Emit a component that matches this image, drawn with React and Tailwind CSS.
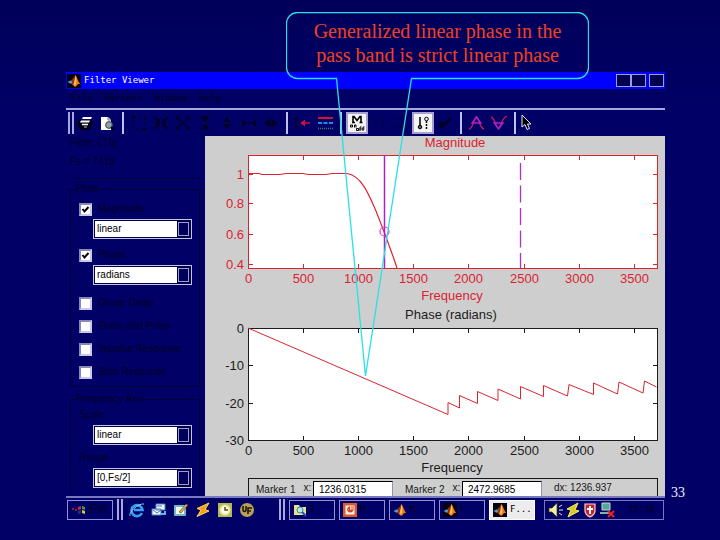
import React from "react";

const SANS = "font-['Liberation_Sans',Arial,sans-serif]";
const MONO = "font-['DejaVu_Sans_Mono','Noto_Sans_CJK_SC',monospace]";

function MatlabLogo({ boxed }) {
  return (
    <svg width="14" height="14" viewBox="0 0 14 14" aria-hidden="true">
      {boxed && <rect width="14" height="14" fill="#000010" />}
      <path d="M0.5 8 L4 6.2 L6 8 L4 10 Z" fill="#4aa0c8" />
      <path d="M4 6.2 L6.5 4 L8.5 1 L7.5 7 L5.8 11 L4 9.8 L5.6 8 Z" fill="#a03010" />
      <path d="M8.5 1 C10 3 11 7.5 13.5 10.5 C12 9.6 10.8 10 9.6 12 C8.6 13.4 7 13 5.8 10.6 C7.4 8 7.8 4 8.5 1 Z" fill="#f07818" />
      <path d="M8.5 1 C9.4 4 9.6 7 9 10 L7.6 11.8 L7 9 C8 6 8.2 3.4 8.5 1 Z" fill="#f8c858" />
    </svg>
  );
}

function Sep() {
  return <span className="mx-1 h-[22px] w-[2px] shrink-0 bg-[#c0c0ec]" />;
}

function Grip() {
  return (
    <span className="flex h-[22px] w-[6px] shrink-0 gap-[2px]">
      <span className="w-[2px] border border-[#a8a8dc]" />
      <span className="w-[2px] border border-[#a8a8dc]" />
    </span>
  );
}

function Tool({ label, on, children }) {
  return (
    <button
      type="button"
      aria-label={label}
      className={
        on
          ? "flex size-[22px] shrink-0 border-2 border-[#a8a0d0] bg-[#f4f4f4]"
          : "flex size-[22px] shrink-0"
      }
    >
      <svg viewBox={on ? "2 2 18 18" : "0 0 22 22"} className="size-full" fill="none">
        {children}
      </svg>
    </button>
  );
}

function Toolbar() {
  const d = "#000024";
  return (
    <div className="flex h-[26px] items-center overflow-hidden pl-[2px]">
      <Grip />
      <Tool label="Print">
        <path d="M4 8 L17 8 L19 12 L15 18 H7 L3 13 Z" fill="#000018" />
        <path d="M9 5 H18 L17 7 H8 Z M7 8.500 H16 L15 10.500 H6 Z" fill="#fff" />
        <path d="M8 12.500 H14" stroke="#fff" strokeWidth="1.500" />
        <path d="M10 15 H13" stroke="#b8c8a0" />
      </Tool>
      <Tool label="Print preview">
        <path d="M5 5 H12 L15 8 V18 H5 Z" fill="#fff" />
        <path d="M12 5 V8 H15" stroke="#777" />
        <circle cx="13" cy="13" r="3.4" fill="#8ea0a8" stroke="#38484c" />
        <path d="M15 15 L18 18" stroke={d} strokeWidth="2" />
      </Tool>
      <Sep />
      <Tool label="Zoom region">
        <path d="M5 5 H17 V17 H5 Z" stroke={d} strokeDasharray="3 3" />
        <path d="M4 6 L7 4 M14 17 L18 17" stroke={d} strokeWidth="2" />
      </Tool>
      <Tool label="Zoom in">
        <path d="M4 5 L9 10 M18 5 L13 10 M4 17 L9 12 M18 17 L13 12 M9 7 V10 H6 M13 7 V10 H16 M9 15 V12 H6 M13 15 V12 H16" stroke={d} strokeWidth="1.5" />
      </Tool>
      <Tool label="Zoom full">
        <path d="M5 5 L17 17 M17 5 L5 17 M5 8 V5 H8 M14 5 H17 V8 M5 14 V17 H8 M14 17 H17 V14" stroke={d} strokeWidth="1.2" />
      </Tool>
      <Tool label="Zoom in y">
        <path d="M8 6 H14 L11 10 Z M8 16 H14 L11 12 Z" fill={d} stroke={d} />
        <path d="M7 5 H15 M7 17 H15" stroke={d} strokeWidth="1.500" />
      </Tool>
      <Tool label="Zoom out y">
        <path d="M11 5 L15 10 H7 Z M11 17 L15 12 H7 Z" fill={d} />
      </Tool>
      <Tool label="Zoom in x">
        <path d="M4 7 V15 L9 11 Z M18 7 V15 L13 11 Z" fill={d} />
        <path d="M4 11 H18" stroke={d} />
      </Tool>
      <Tool label="Zoom out x">
        <path d="M5 11 L10 7 V15 Z M17 11 L12 7 V15 Z" fill={d} stroke={d} />
      </Tool>
      <Sep />
      <Tool label="Select trace">
        <path d="M4 5 V17" stroke={d} strokeWidth="2" />
        <path d="M9 11 H18" stroke="#d01040" strokeWidth="1.5" />
        <path d="M13 7.500 L8.500 11 L13 14.500 Z" fill="#d01040" />
      </Tool>
      <Tool label="Line properties">
        <path d="M4 6 H19" stroke="#d81030" strokeWidth="2" />
        <path d="M4 11 H19" stroke="#2088e8" strokeWidth="2" strokeDasharray="4 1.5" />
        <path d="M4 16.5 H19" stroke="#208868" strokeWidth="1.5" strokeDasharray="1 1" />
      </Tool>
      <Sep />
      <Tool label="Toggle markers" on>
        <path d="M6 10.5 H9 M7 10.5 V4.5 H8 L11 8.5 L14 4.5 H15 V10.5 M13.5 10.5 H16.5" stroke="#000" strokeWidth="1.6" />
        <path d="M4.5 13 H6.5 V15 H4.5 Z M8.5 15.5 V13 H10 V15.5" stroke="#000" />
        <path d="M10.5 16.5 H12.5 V18.5 H10.5 Z M14 19 V15 H15.5 M17 19 V15 H18.5 M13.5 17 H18.5" stroke="#000" />
      </Tool>
      <Tool label="Vertical markers">
        <path d="M7 5 V17 M15 5 V17" stroke="#000044" />
      </Tool>
      <Tool label="Horizontal markers">
        <path d="M4 7 H18 M4 15 H18" stroke="#000050" />
      </Tool>
      <Tool label="Track markers" on>
        <path d="M8 5 V15" stroke="#000" strokeWidth="1.5" />
        <circle cx="8" cy="15" r="1.800" fill="#555" stroke="#000" />
        <path d="M14.500 9 V18" stroke="#000" strokeWidth="1.500" strokeDasharray="2 1" />
        <circle cx="14.500" cy="7" r="1.800" stroke="#000" />
      </Tool>
      <Tool label="Slope markers">
        <path d="M5 14 L8 11 L10 13 L17 6 M6 16 L9 14" stroke={d} strokeWidth="2.5" />
      </Tool>
      <Sep />
      <Tool label="Find peaks">
        <path d="M3 17 C7 17 8 5 10.500 5 C13 5 13 16 18 17" stroke="#d01850" strokeWidth="1.300" />
        <path d="M10.500 5 L15 11 H6 Z" stroke="#b020d0" strokeWidth="1.300" />
      </Tool>
      <Tool label="Find valleys">
        <path d="M3 5 C7 6 8 16 10.500 16 C13 16 13 6 19 4" stroke="#d01850" strokeWidth="1.300" />
        <path d="M10.500 17 L15 11 H6 Z" stroke="#b020d0" strokeWidth="1.300" />
      </Tool>
      <Sep />
      <Tool label="Help pointer">
        <path d="M2 3 V15 L5 12.500 L7 17.500 L9.500 16.500 L7.500 12 H11 Z" fill="#000" stroke="#e8e8ff" />
      </Tool>
    </div>
  );
}

function Drop({ id, label, value }) {
  return (
    <div className="ml-[22px] mt-[3px] flex h-5 w-[99px] border border-[#c4c4e8] bg-[#000048] p-px">
      <select
        id={id}
        aria-label={label}
        defaultValue={value}
        className="min-w-0 flex-1 appearance-none bg-white pl-[2px] text-[10px] leading-[16px] text-black"
      >
        <option>{value}</option>
      </select>
      <span className="pointer-events-none m-px w-[11px] border border-[#9c9cd8] bg-[#000058]" />
    </div>
  );
}

function Check({ label, checked, className }) {
  return (
    <label className={"ml-2 flex h-[14px] items-center gap-[6px] " + className}>
      <span className="grid size-[13px] place-items-center">
        <input
          type="checkbox"
          defaultChecked={checked}
          className="col-start-1 row-start-1 size-[13px] appearance-none border-2 border-t-[#8888b0] border-l-[#8888b0] border-b-[#c8c8e8] border-r-[#c8c8e8] bg-white"
        />
        {checked && (
          <svg viewBox="0 0 9 9" className="pointer-events-none col-start-1 row-start-1 size-[9px]" fill="none">
            <path d="M1.500 4 L3.500 6.500 L7.500 2" stroke="#000" strokeWidth="2" />
          </svg>
        )}
      </span>
      {label}
    </label>
  );
}

function SidePanel() {
  return (
    <aside className="w-[139px] shrink-0 pl-1 pr-[5px] text-[10px] leading-[14px] text-[#000028]">
      <p>Filter: LTIp</p>
      <p className="mt-[5px]">Fs = 7418</p>
      <div className="mt-[9px] h-px bg-[#000034]" />
      <fieldset className="mt-[3px] border border-[#000034] pb-[7px]">
        <legend className="ml-1 px-px">Plots</legend>
        <Check label="Magnitude" checked className="mt-[6px]" />
        <Drop id="mag" label="Magnitude units" value="linear" />
        <Check label="Phase" checked className="mt-[9px]" />
        <Drop id="phase" label="Phase units" value="radians" />
        <Check label="Group Delay" className="mt-[11px]" />
        <Check label="Zeros and Poles" className="mt-[9px]" />
        <Check label="Impulse Response" className="mt-[9px]" />
        <Check label="Step Response" className="mt-[9px]" />
      </fieldset>
      <fieldset className="mt-[5px] border border-b-0 border-[#000034] pb-[6px]">
        <legend className="ml-1 px-px">Frequency Axis</legend>
        <label htmlFor="scale" className="ml-2 mt-[2px] block">Scale</label>
        <Drop id="scale" label="Scale" value="linear" />
        <label htmlFor="range" className="ml-2 mt-[6px] block">Range</label>
        <Drop id="range" label="Range" value="[0,Fs/2]" />
      </fieldset>
    </aside>
  );
}

const X_TICKS = [0, 500, 1000, 1500, 2000, 2500, 3000, 3500];
const tickX = (v) => Math.round(248 + v * 0.1102) + 0.5;

function Axes({ top, bottom, color, yTicks, title, titleX, titleY, labelY, freqY }) {
  return (
    <g>
      <rect x="248.500" y={top + 0.5} width="409" height={bottom - top} fill="#fff" stroke={color} />
      {X_TICKS.map((v) => (
        <g key={v}>
          <path d={`M${tickX(v)} ${top} v5 M${tickX(v)} ${bottom} v-4`} stroke={color} />
          <text x={tickX(v)} y={labelY} textAnchor="middle" fill={color}>{v}</text>
        </g>
      ))}
      {yTicks.map(([label, y]) => (
        <g key={label}>
          <path d={`M248 ${y + 0.5} h5 M658 ${y + 0.5} h-5`} stroke={color} />
          <text x="244" y={y + 5} textAnchor="end" fill={color}>{label}</text>
        </g>
      ))}
      <text x="452" y={freqY} textAnchor="middle" fill={color}>Frequency</text>
      <text x={titleX} y={titleY} textAnchor="middle" fill={color}>{title}</text>
    </g>
  );
}

function Charts() {
  return (
    <svg
      viewBox="205 136 460 342"
      className="block w-full overflow-visible font-['Liberation_Sans',Arial,sans-serif] text-[13px]"
      fill="none"
      role="img"
      aria-label="Magnitude and phase response"
    >
      <Axes top={155} bottom={268} color="#dc2430" title="Magnitude" titleX={455} titleY={147} labelY={283} freqY={300}
        yTicks={[["1", 174], ["0.8", 203], ["0.6", 234], ["0.4", 264]]} />
      <Axes top={328} bottom={440} color="#1c1c1c" title="Phase (radians)" titleX={451} titleY={319} labelY={455} freqY={472}
        yTicks={[["0", 328], ["-10", 365], ["-20", 403], ["-30", 440]]} />
      <path d="M248 173.500 H259 L262 174.500 H280 L286 173.500 H303 L308 174.500 H326 L332 173.500 H347 C362 176 369 195 376 211 C384 231 391 250 397 268" stroke="#dc2430" strokeWidth="1.2" />
      <path d="M384.500 155 V268" stroke="#a820c8" strokeWidth="1.5" />
      <circle cx="384.500" cy="231.500" r="4.500" stroke="#d840d8" strokeWidth="1.200" />
      <path d="M520.500 163 V268" stroke="#b030c8" strokeWidth="1.300" strokeDasharray="17 5.500" />
      <path d="M248 328 L448 414.500 V402.500 L459.500 408 V395.500 L477.500 403.500 V391.500 L498 400.500 V389 L520.500 399 V386.500 L543.500 396.500 V385.500 L567.500 396 L569 384.500 L593.500 394.500 V383 L617.500 394 L619 382 L643 393 L644.500 381 L656.500 387" stroke="#dc2430" />
    </svg>
  );
}

function Marker({ id, label, value }) {
  return (
    <>
      <label htmlFor={id} className="flex w-[57px] shrink-0 gap-2 whitespace-nowrap">
        <span className="pt-[2px]">{label}</span>
        <span>x:</span>
      </label>
      <input
        id={id}
        defaultValue={value}
        className="mr-3 mt-[2px] h-[18px] w-[80px] min-w-0 border border-[#9090b8] border-l-black border-t-black bg-white pl-[5px] text-[10px] text-black"
      />
    </>
  );
}

function MarkerBar() {
  return (
    <div className="ml-[43px] mr-[7px] flex h-[18px] overflow-hidden border border-b-0 border-[#181818] pl-[7px] text-[10px] leading-[18px] text-[#181818]">
      <Marker id="m1" label="Marker 1" value="1236.0315" />
      <Marker id="m2" label="Marker 2" value="2472.9685" />
      <output className="whitespace-nowrap">dx: 1236.937</output>
    </div>
  );
}

function QuickIcon({ label, children }) {
  return (
    <button type="button" aria-label={label} className="size-4 shrink-0">
      <svg viewBox="0 0 16 16" className="size-full" fill="none">{children}</svg>
    </button>
  );
}

function Task({ active, text, children }) {
  return (
    <button
      type="button"
      className={
        "flex h-5 w-[46px] shrink-0 items-center gap-[3px] border pl-[3px] text-[9px] " +
        (active ? "border-white bg-[#ececec] text-black" : "border-[#9090d4] text-[#000028]")
      }
    >
      {children}
      {text}
    </button>
  );
}

function Taskbar() {
  return (
    <div className={"flex h-6 items-center overflow-hidden border-t-2 border-[#7878c0] pl-px pt-px " + MONO}>
      <button type="button" className="flex h-5 w-[46px] shrink-0 items-center gap-[2px] border border-[#9090d4] pl-[3px] text-[9px] text-[#000028]">
        <svg viewBox="0 0 16 14" className="h-[14px] w-4" fill="none">
          <path d="M1 6 H3 M4 7 H6" stroke="#a01828" strokeWidth="2" />
          <path d="M7 4 L10 3 V6 L7 7 Z" fill="#e02828" />
          <path d="M11 3 L14 4 V7 L11 6 Z" fill="#28a838" />
          <path d="M7 8 L10 7 V10 L7 11 Z" fill="#183890" />
          <path d="M11 7 L14 8 V11 L11 10 Z" fill="#e8c828" />
        </svg>
        开始
      </button>
      <span className="ml-1"><Grip /></span>
      <div className="ml-[6px] flex w-[150px] shrink-0 gap-[6px]">
        <QuickIcon label="Browser">
          <path d="M13 11 A5.500 5.500 0 1 1 13.500 8 H5" stroke="#38a0f0" strokeWidth="2.600" />
          <path d="M1 14 C-1 11 9 1 15 2" stroke="#90d0ff" />
        </QuickIcon>
        <QuickIcon label="Mail">
          <path d="M5 2 H14 V8 H5 Z M1 7 H10 V13 H1 Z" fill="#f4f4f4" stroke="#5080c0" />
          <path d="M2 8 L6 11 L10 8 M6 4 L11 4" stroke="#3878d0" />
          <path d="M10 12 H14 V9" stroke="#60b0f0" strokeWidth="2" />
        </QuickIcon>
        <QuickIcon label="Desktop">
          <rect x="1" y="3" width="12" height="11" rx="1" fill="#70b8c8" />
          <path d="M3 5 H11 V12 H3 Z" fill="#f8f8e8" />
          <path d="M6 10 L13 2 L15 3 L8 11 Z" fill="#d8b048" stroke="#504020" strokeWidth=".6" />
        </QuickIcon>
        <QuickIcon label="Winamp">
          <path d="M14 1 L2 6.500 L6 8 L2 14.500 L14 9 L10 7.500 Z" fill="#f8a018" stroke="#f8d868" />
        </QuickIcon>
        <QuickIcon label="Clock">
          <rect x="1" y="1" width="14" height="14" fill="#b8b850" />
          <circle cx="8" cy="8" r="4.500" fill="#fffff0" stroke="#e8e8b0" strokeWidth="2" />
          <path d="M8 5 V8 H11" stroke="#505010" strokeWidth="1.500" />
        </QuickIcon>
        <QuickIcon label="Editor">
          <circle cx="8" cy="8" r="7" fill="#b8a058" />
          <path d="M4 4 V8 C4 10 7 10 7 8 V4 M13 6 H9 V12 M9 9 H12" stroke="#201808" strokeWidth="1.600" />
        </QuickIcon>
      </div>
      <Grip />
      <div className="ml-1 flex shrink-0 gap-1">
        <Task text="E">
          <svg viewBox="0 0 14 14" className="size-[14px]" fill="none">
            <path d="M1 2 H6 L7 4 H13 V12 H1 Z" fill="#f0e080" />
            <circle cx="7" cy="7" r="3" fill="#b0e8f8" stroke="#3888b0" />
            <path d="M9 9 L13 13" stroke="#2050c0" strokeWidth="2" />
          </svg>
        </Task>
        <Task text="M">
          <svg viewBox="0 0 14 14" className="size-[14px]" fill="none">
            <rect width="14" height="14" fill="#d85830" />
            <rect x="2.500" y="2.500" width="9" height="9" fill="#fff0e8" />
            <path d="M6.500 4 A2.500 2.500 0 1 0 9.500 7.500 H6.500 Z" stroke="#c84820" strokeWidth="1.300" />
            <path d="M8 4 H11 M8 6 H11" stroke="#c84820" />
          </svg>
        </Task>
        <Task text="M"><MatlabLogo /></Task>
        <Task text="F"><MatlabLogo boxed /></Task>
        <Task active text="F..."><MatlabLogo boxed /></Task>
      </div>
      <div className="ml-auto mr-px flex h-5 w-[120px] min-w-0 items-center gap-px border border-[#7878c0] pl-[3px] text-[9px] text-[#000028]">
        <QuickIcon label="Volume">
          <path d="M1 6 H4 L9 1 V15 L4 10 H1 Z" fill="#f0f0a0" stroke="#404018" strokeWidth=".7" />
          <path d="M11 5 L14 3 M11 8 H15 M11 11 L14 13" stroke="#e8e8e8" />
        </QuickIcon>
        <QuickIcon label="Winamp agent">
          <path d="M13 1 L2 7 L6 8 L3 15 L14 9 L10 8 Z" fill="#d8c820" stroke="#f8f070" />
        </QuickIcon>
        <QuickIcon label="Antivirus">
          <path d="M3 2 H13 V9 C13 12 10 14 8 15 C6 14 3 12 3 9 Z" fill="#d02030" stroke="#f0d8d8" strokeWidth="1.200" />
          <path d="M8 4 V12 M5 7 H11" stroke="#fff" strokeWidth="2" />
        </QuickIcon>
        <QuickIcon label="Network">
          <path d="M3 1 H11 V8 H3 Z" fill="#50a898" stroke="#c0d8d0" />
          <path d="M1 11 H10" stroke="#88b0a8" strokeWidth="2" />
          <path d="M9 9 L15 15 M15 9 L9 15" stroke="#f02020" strokeWidth="2" />
        </QuickIcon>
        <span className="pl-3">15:36</span>
      </div>
    </div>
  );
}

function WinButton({ label, className }) {
  return (
    <button type="button" aria-label={label} className={"h-[13px] w-[15px] border border-[#9c9cdc] bg-[#000050] " + className} />
  );
}

export default function App() {
  return (
    <div className={"relative flex min-h-screen items-start bg-linear-to-b from-[#00005a] to-[#000066] to-20% pt-[72px] pl-[66px] " + SANS}>
      <main className="min-w-0 flex-1">
        <header className={"flex h-[17px] items-center gap-[3px] bg-[#0000ff] px-px text-[9px] text-white " + MONO}>
          <MatlabLogo boxed />
          <h1 className="flex-1">Filter Viewer</h1>
          <WinButton label="Minimize" className="" />
          <WinButton label="Maximize" className="-ml-[3px]" />
          <WinButton label="Close" className="" />
        </header>
        <nav className={"flex h-[19px] items-center gap-3 pl-[5px] text-[9px] text-[#000028] " + MONO}>
          <button type="button">File</button>
          <button type="button">Markers</button>
          <button type="button">Window</button>
          <button type="button">Help</button>
        </nav>
        <div className="h-[2px] bg-[#a8a8dc]" />
        <Toolbar />
        <div className="flex">
          <SidePanel />
          <section className="flex min-w-0 flex-1 flex-col bg-[#cecece]">
            <Charts />
            <MarkerBar />
          </section>
        </div>
        <Taskbar />
      </main>
      <footer className="w-[55px] shrink-0 self-start pl-[6px] pt-[412px] font-['Liberation_Serif',serif] text-[14px] leading-[18px] text-[#f0f0ff]">
        33
      </footer>

      <div className="pointer-events-none absolute left-[286px] top-3 w-[303px]">
        <svg viewBox="0 0 303 366" className="absolute left-0 top-0 w-full" fill="none" aria-hidden="true">
          <path d="M11.500 .5 H291.500 A11 11 0 0 1 302.500 11.500 V55.500 A11 11 0 0 1 291.500 66.500 H125.500 L79.500 364 L50.500 66.500 H11.500 A11 11 0 0 1 .5 55.500 V11.500 A11 11 0 0 1 11.500 .5 Z" stroke="#28e0e8" strokeWidth="1.300" />
        </svg>
        <p className="px-5 pt-[7px] text-center font-['Liberation_Serif',serif] text-[20px] leading-6 text-[#f04020]">
          Generalized linear phase in the pass band is strict linear phase
        </p>
      </div>
    </div>
  );
}
